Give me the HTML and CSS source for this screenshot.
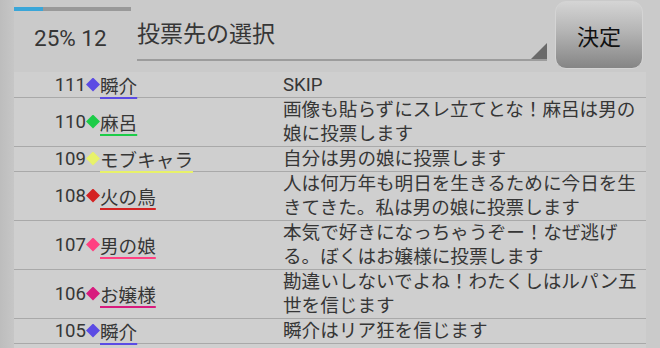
FILE: index.html
```html
<!DOCTYPE html>
<html lang="ja">
  <head>
    <meta charset="UTF-8" />
    <title>投票先の選択</title>
    <link rel="stylesheet" href="styles.css">
  </head>
  <body>
    <div class="screen">
      <!-- ヘッダー -->
      <div class="header">
        <div class="status">
          <div class="progress"><div class="progress-fill" style="width: 25%"></div></div>
          <div class="stat">25% 12</div>
        </div>
        <div class="picker">
          <span class="picker-label">投票先の選択</span>
          <span class="picker-arrow"></span>
        </div>
        <button class="decide">決定</button>
      </div>

      <!-- 投票ログ -->
      <div class="log">
        <div class="row">
          <div class="who"><span class="num">111</span><span class="gem c-shun"></span><span class="name c-shun">瞬介</span></div>
          <div class="msg">SKIP</div>
        </div>
        <div class="row">
          <div class="who"><span class="num">110</span><span class="gem c-maro"></span><span class="name c-maro">麻呂</span></div>
          <div class="msg">画像も貼らずにスレ立てとな！麻呂は男の娘に投票します</div>
        </div>
        <div class="row">
          <div class="who"><span class="num">109</span><span class="gem c-mob"></span><span class="name c-mob">モブキャラ</span></div>
          <div class="msg">自分は男の娘に投票します</div>
        </div>
        <div class="row">
          <div class="who"><span class="num">108</span><span class="gem c-tori"></span><span class="name c-tori">火の鳥</span></div>
          <div class="msg">人は何万年も明日を生きるために今日を生きてきた。私は男の娘に投票します</div>
        </div>
        <div class="row">
          <div class="who"><span class="num">107</span><span class="gem c-otoko"></span><span class="name c-otoko">男の娘</span></div>
          <div class="msg">本気で好きになっちゃうぞー！なぜ逃げる。ぼくはお嬢様に投票します</div>
        </div>
        <div class="row">
          <div class="who"><span class="num">106</span><span class="gem c-ojou"></span><span class="name c-ojou">お嬢様</span></div>
          <div class="msg">勘違いしないでよね！わたくしはルパン五世を信じます</div>
        </div>
        <div class="row">
          <div class="who"><span class="num">105</span><span class="gem c-shun"></span><span class="name c-shun">瞬介</span></div>
          <div class="msg">瞬介はリア狂を信じます</div>
        </div>
      </div>
    </div>
  </body>
</html>
```

FILE: styles.css
```css
body {
  margin: 0;
  background: #cacaca;
  font-family: Roboto, "Noto Sans CJK JP", sans-serif;
  color: #363636;
  overflow: hidden;
}
.screen {
  width: 660px;
  height: 348px;
  overflow: hidden;
  background: linear-gradient(to right, #bdbdbd 0, #c6c6c6 14px, #cacaca 14px);
}
.header {
  display: flex;
  height: 72px;
  padding-left: 14px;
}
.status {
  width: 123px;
}
.progress {
  width: 117px;
  height: 4px;
  margin-top: 7px;
  background: #999;
}
.progress-fill {
  height: 100%;
  background: #3aa6d8;
}
.stat {
  padding: 12px 0 0 20px;
  font-size: 22.5px;
  line-height: 30px;
}
.picker {
  position: relative;
  width: 410px;
  height: 59px;
  border-bottom: 2px solid #9c9c9c;
}
.picker-label {
  display: block;
  padding-top: 16px;
  font-family: "Noto Sans CJK JP", sans-serif;
  font-size: 23px;
  line-height: 32px;
}
.picker-arrow {
  position: absolute;
  right: 0;
  bottom: 0;
  width: 16px;
  height: 16px;
  background: #6a6a6a;
  clip-path: polygon(100% 0, 100% 100%, 0 100%);
}
.decide {
  width: 88px;
  height: 68px;
  margin: 1px 0 0 8px;
  border: 1px solid #d4d4d4;
  border-radius: 11px;
  background: linear-gradient(to bottom, #d4d4d4, #b4b4b4 45%, #858585);
  font-family: "Noto Sans CJK JP", sans-serif;
  font-size: 22px;
  color: #111;
  padding: 0;
}
.log {
  width: 632px;
  margin-left: 14px;
  padding-top: 1px;
  height: 275px;
  background: #cfcfcf;
  font-size: 18.6px;
  line-height: 24px;
}
.row {
  display: grid;
  grid-template-columns: 269px 360px;
  border-bottom: 1px solid #a9a9a9;
}
.who {
  display: flex;
  align-items: center;
}
.num {
  width: 72px;
  text-align: right;
}
.gem {
  flex: none;
  width: 14px;
  height: 14px;
  margin: 0 0 1px 0;
  clip-path: polygon(50% 0, 100% 50%, 50% 100%, 0 50%);
}
.name {
  font-family: "Noto Sans CJK JP", sans-serif;
  text-decoration: underline 2px;
  text-underline-offset: 4px;
}
.msg {
  font-family: Roboto, "Noto Sans CJK JP", sans-serif;
}
.gem.c-shun { background: #5b4be4; }
.gem.c-maro { background: #1ccc48; }
.gem.c-mob { background: #e8f26a; }
.gem.c-tori { background: #d42222; }
.gem.c-otoko { background: #ff4081; }
.gem.c-ojou { background: #d81b7e; }
.name.c-shun { text-decoration-color: #5b4be4; }
.name.c-maro { text-decoration-color: #1ccc48; }
.name.c-mob { text-decoration-color: #e8f26a; }
.name.c-tori { text-decoration-color: #d42222; }
.name.c-otoko { text-decoration-color: #ff4081; }
.name.c-ojou { text-decoration-color: #d81b7e; }
```
